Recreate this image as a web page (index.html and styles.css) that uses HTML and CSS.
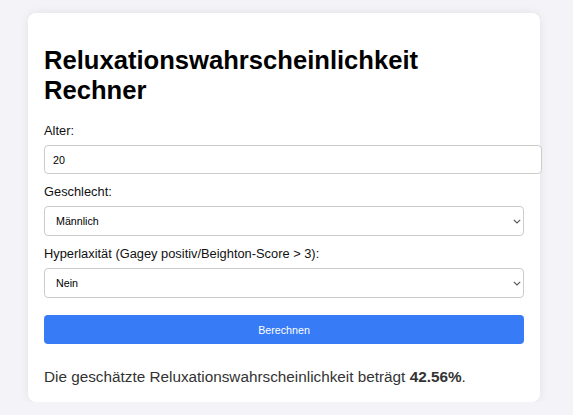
FILE: index.html
```html
<!DOCTYPE html>
<html lang="de">
<head>
<meta charset="utf-8">
<title>Reluxationswahrscheinlichkeit Rechner</title>
<link rel="stylesheet" href="styles.css">
</head>
<body>
<main class="card">
  <h1 class="title">Reluxationswahrscheinlichkeit Rechner</h1>
  <label class="label" for="age">Alter:</label>
  <input class="field" id="age" type="number" value="20">
  <label class="label" for="sex">Geschlecht:</label>
  <div class="select-wrap">
    <select class="select" id="sex">
      <option>Männlich</option>
      <option>Weiblich</option>
    </select>
    <svg class="chevron" width="8" height="5" viewBox="0 0 8 5" aria-hidden="true"><path d="M0.8 0.8 L4 4 L7.2 0.8" fill="none" stroke="#555" stroke-width="1.1"/></svg>
  </div>
  <label class="label" for="hyper">Hyperlaxität (Gagey positiv/Beighton-Score &gt; 3):</label>
  <div class="select-wrap">
    <select class="select" id="hyper">
      <option>Nein</option>
      <option>Ja</option>
    </select>
    <svg class="chevron" width="8" height="5" viewBox="0 0 8 5" aria-hidden="true"><path d="M0.8 0.8 L4 4 L7.2 0.8" fill="none" stroke="#555" stroke-width="1.1"/></svg>
  </div>
  <button class="button" type="button">Berechnen</button>
  <p class="result">Die geschätzte Reluxationswahrscheinlichkeit beträgt <strong>42.56%</strong>.</p>
</main>
</body>
</html>
```

FILE: styles.css
```css
html, body {
  margin: 0;
  padding: 0;
}

body {
  background: #f3f3f8;
  font-family: "Liberation Sans", Arial, Helvetica, sans-serif;
  color: #000;
  padding: 13px 0 0 28px;
}

.card {
  width: 480px;
  background: #fff;
  border-radius: 8px;
  box-shadow: 0 0 10px rgba(0, 0, 0, 0.08);
  padding: 16px 16px 16px 16px;
}

.title {
  font-size: 25.6px;
  line-height: 30px;
  font-weight: bold;
  margin: 16px 0 18px;
  color: #000;
}

.label {
  display: block;
  font-size: 12.85px;
  line-height: 15px;
  margin-bottom: 7px;
  color: #111;
}

.field {
  display: block;
  width: 100%;
  box-sizing: content-box;
  height: 11px;
  line-height: 11px;
  padding: 8px;
  margin: 0 0 10px;
  border: 1px solid #ccc;
  border-radius: 4px;
  font-family: inherit;
  font-size: 10.7px;
  color: #000;
  background: #fff;
  outline: none;
  -moz-appearance: textfield;
}

.field::-webkit-outer-spin-button,
.field::-webkit-inner-spin-button {
  -webkit-appearance: none;
  margin: 0;
}

.select-wrap {
  position: relative;
  margin-bottom: 10px;
}

.select {
  display: block;
  width: 100%;
  height: 30px;
  box-sizing: border-box;
  padding: 0 11px;
  border: 1px solid #ccc;
  border-radius: 4px;
  background: #fff;
  font-family: inherit;
  font-size: 10.7px;
  color: #000;
  -webkit-appearance: none;
  appearance: none;
  outline: none;
}

.chevron {
  position: absolute;
  right: 3px;
  top: 13px;
  pointer-events: none;
}

.button {
  display: block;
  width: 100%;
  height: 29px;
  margin-top: 17px;
  border: none;
  border-radius: 4px;
  background: #377cf6;
  color: #fff;
  font-family: inherit;
  font-size: 10.7px;
  cursor: pointer;
}

.result {
  margin: 24px 0 0;
  font-size: 15.3px;
  line-height: 18px;
  color: #333;
}

.result strong {
  font-weight: bold;
}
```
